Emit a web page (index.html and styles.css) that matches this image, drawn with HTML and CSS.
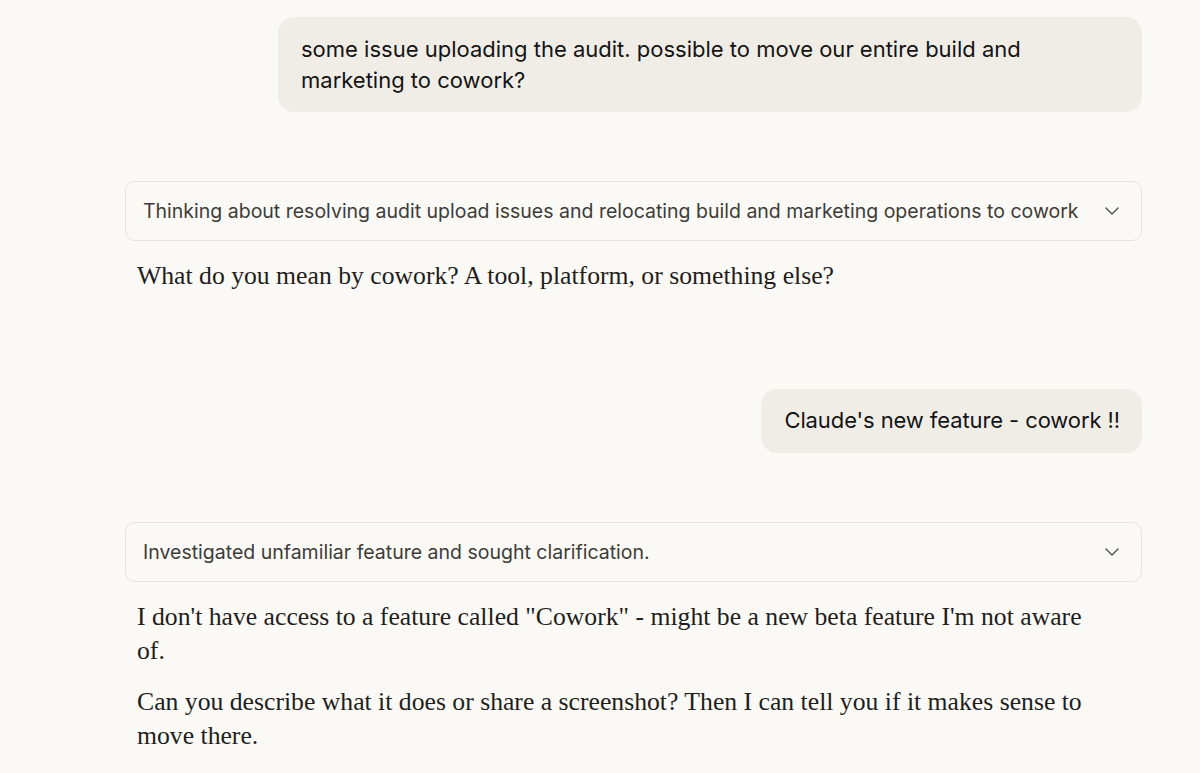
FILE: index.html
```html
<!DOCTYPE html>
<html>
<head>
<meta charset="utf-8">
<link rel="stylesheet" href="styles.css">
</head>
<body>
<main class="chat">
  <div class="user-row first">
    <div class="bubble">some issue uploading the audit. possible to move our entire build and marketing to cowork?</div>
  </div>
  <div class="thinking">
    <span class="thinking-text">Thinking about resolving audit upload issues and relocating build and marketing operations to cowork</span>
    <svg class="chev" width="14" height="8" viewBox="0 0 14 8"><path d="M1 1 L7 7 L13 1" fill="none" stroke="#4a4945" stroke-width="1.3" stroke-linecap="round" stroke-linejoin="round"/></svg>
  </div>
  <div class="reply">
    <p>What do you mean by cowork? A tool, platform, or something else?</p>
  </div>
  <div class="user-row second">
    <div class="bubble">Claude's new feature - cowork !!</div>
  </div>
  <div class="thinking">
    <span class="thinking-text">Investigated unfamiliar feature and sought clarification.</span>
    <svg class="chev" width="14" height="8" viewBox="0 0 14 8"><path d="M1 1 L7 7 L13 1" fill="none" stroke="#4a4945" stroke-width="1.3" stroke-linecap="round" stroke-linejoin="round"/></svg>
  </div>
  <div class="reply">
    <p>I don't have access to a feature called "Cowork" - might be a new beta feature I'm not aware of.</p>
    <p>Can you describe what it does or share a screenshot? Then I can tell you if it makes sense to move there.</p>
  </div>
</main>
</body>
</html>
```
FILE: styles.css
```css
html, body {
  margin: 0;
  padding: 0;
  background: #faf9f5;
}
body {
  height: 773px;
  overflow: hidden;
}
.chat {
  display: flex;
  flex-direction: column;
  width: 1017px;
  margin-left: 125px;
  padding-top: 17px;
}
.user-row {
  display: flex;
  justify-content: flex-end;
}
.bubble {
  background: #f0ede7;
  border-radius: 16px;
  padding: 17px 22px 16px 23px;
  font-family: Inter, "Noto Sans", sans-serif;
  font-size: 22px;
  line-height: 31px;
  color: #141413;
  max-width: 819px;
}
.second {
  margin-top: 96px;
}
.second .bubble {
  padding: 16px 22px 17px 23px;
  letter-spacing: -0.1px;
}
.thinking {
  margin-top: 69px;
  height: 58px;
  border: 1px solid #e7e4dd;
  border-radius: 10px;
  display: flex;
  align-items: center;
  justify-content: space-between;
  padding: 0 22px 0 17px;
  font-family: Inter, "Noto Sans", sans-serif;
  font-size: 19.5px;
  color: #3d3c38;
}
.chev {
  display: block;
}
.reply {
  margin-top: 18px;
  padding-left: 12px;
  width: 968px;
  font-family: "Liberation Serif", "DejaVu Serif", serif;
  font-size: 25.7px;
  line-height: 34px;
  color: #1f1e1c;
}
.reply p {
  margin: 0;
}
.reply p + p {
  margin-top: 17px;
}
```
